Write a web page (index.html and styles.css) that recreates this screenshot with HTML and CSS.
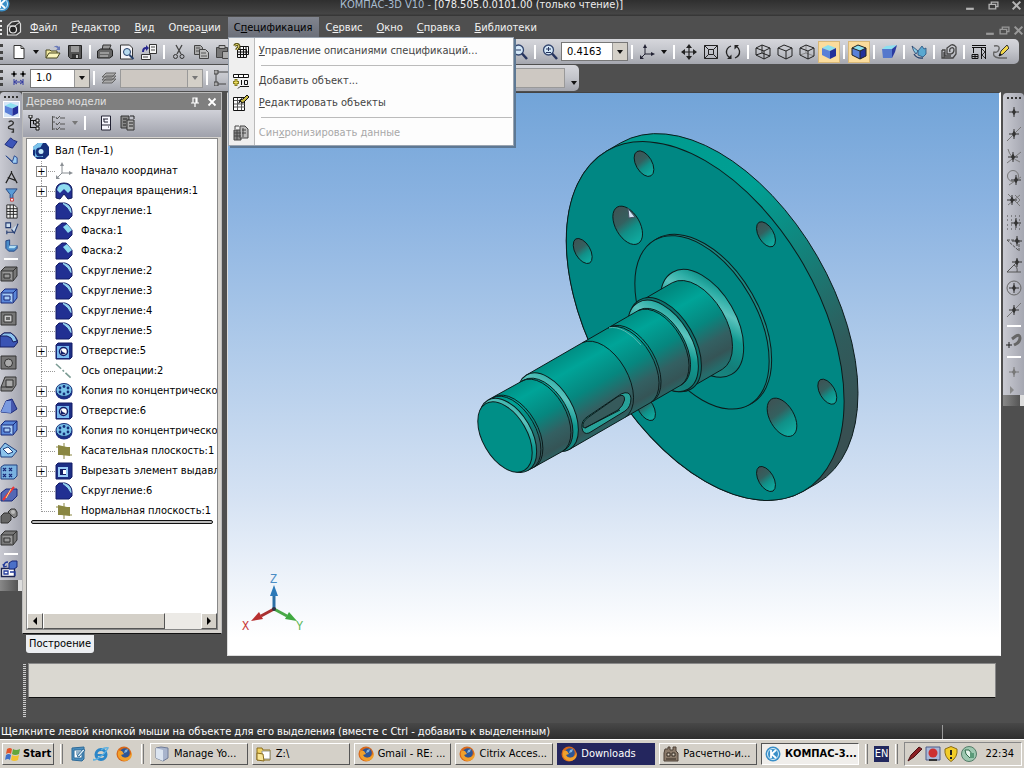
FILE: index.html
```html
<!DOCTYPE html>
<html lang="ru">
<head>
<meta charset="utf-8">
<title>КОМПАС-3D V10</title>
<link rel="stylesheet" href="styles.css">
</head>
<body>
<svg class="defs" aria-hidden="true">
  <symbol id="new" viewBox="0 0 16 16"><path d="M3 1.500h7l3 3v10H3z" fill="#fff" stroke="#333"/><path d="M10 1.500v3h3" fill="none" stroke="#333"/></symbol>
  <symbol id="open" viewBox="0 0 16 16"><path d="M1 14V6h4l1 1h6v2" fill="#f2eaa0" stroke="#4a4820"/><path d="M1 14l3-5h11l-3 5z" fill="#fbf6bd" stroke="#4a4820"/><path d="M8 4q3-4 6-1l1-1v4h-4l1.500-1.500Q10 2 8 4z" fill="#6a7ab8"/></symbol>
  <symbol id="save" viewBox="0 0 16 16"><path d="M1.500 1.500h13v13h-11l-2-2z" fill="#555" stroke="#222"/><path d="M4 2h8v6H4z" fill="#999"/><path d="M5 10h7v4H5z" fill="#333"/><path d="M9 11h2v3H9z" fill="#bbb"/></symbol>
  <symbol id="print" viewBox="0 0 16 16"><path d="M5 6l1-5h8l-2 5z" fill="#999" stroke="#333"/><path d="M.5 7l3-2h11l1 2v5l-3 2H.5z" fill="#666" stroke="#222"/><path d="M3 9h9M3 12h8" stroke="#ccc"/></symbol>
  <symbol id="preview" viewBox="0 0 16 16"><path d="M1.500 1h9l3 3v11h-12z" fill="#f4f4f8" stroke="#333"/><circle cx="8" cy="8" r="3.500" fill="#b8dcf0" stroke="#26406a"/><path d="M10.500 11l4 4" stroke="#26406a" stroke-width="2"/></symbol>
  <symbol id="manager" viewBox="0 0 16 16"><path d="M8.500.5h7v9h-7zM.5 10.500h9v5h-9z" fill="#f6f6f6" stroke="#333"/><path d="M10 3h4M10 6h4M2 13h5" stroke="#444"/><path d="M1 8q0-5 4-5V1l3 3-3 3V5q-2 0-2 3z" fill="#28288e"/></symbol>
  <symbol id="cut" viewBox="0 0 16 16"><path d="M5 1l5 9M11 1L6 10" stroke="#444" fill="none" stroke-width="1.300"/><circle cx="4.500" cy="12.500" r="2" fill="none" stroke="#333"/><circle cx="11" cy="12.500" r="2" fill="none" stroke="#333"/></symbol>
  <symbol id="copy" viewBox="0 0 16 16"><path d="M1.500 1.500h6l2 2v7h-8z" fill="#aaa" stroke="#444"/><path d="M6.500 5.500h6l3 3v6h-9z" fill="#bbb" stroke="#444"/><path d="M8 9h5M8 12h6M3 4h4M3 7h3" stroke="#555"/></symbol>
  <symbol id="paste" viewBox="0 0 16 16"><path d="M1.500 3.500h11v10h-11z" fill="#777" stroke="#444"/><path d="M4 1.500h6v3H4z" fill="#bbb" stroke="#444"/><path d="M7.500 7.500h8v7h-8z" fill="#aaa" stroke="#444"/></symbol>
  <symbol id="zoom" viewBox="0 0 16 16"><circle cx="6.500" cy="6" r="5" fill="#d4e8f8" stroke="#33466f" stroke-width="1.300"/><path d="M10 9.500l5 5.500" stroke="#26345e" stroke-width="2.500"/><path d="M4 5h5M6.500 3v4M4 8.500h5" stroke="#26345e"/></symbol>
  <symbol id="zoomout" viewBox="0 0 16 16"><circle cx="6.500" cy="6" r="5" fill="#d4e8f8" stroke="#33466f" stroke-width="1.300"/><path d="M10 9.500l5 5.500" stroke="#26345e" stroke-width="2.500"/><path d="M4 6h5" stroke="#26345e"/></symbol>
  <symbol id="axes" viewBox="0 0 16 16"><path d="M6 10V2M6 10h8M6 10l-4 4" stroke="#223" fill="none"/><path d="M6 0l2 4H4zM16 10l-4-2v4zM1 15V11l4 4z" fill="#223"/></symbol>
  <symbol id="move" viewBox="0 0 16 16"><path d="M8 2v12M2 8h12" stroke="#222" stroke-width="1.200"/><path d="M8 0l3 4H5zM8 16l3-4H5zM0 8l4-3v6zM16 8l-4-3v6z" fill="#222"/></symbol>
  <symbol id="frame" viewBox="0 0 16 16"><path d="M1.500 1.500h13v13h-13zM5.500 5.500h5v5h-5zM1.500 1.500l4 4M14.500 1.500l-4 4M1.500 14.500l4-4M14.500 14.500l-4-4" fill="none" stroke="#222"/></symbol>
  <symbol id="rotate" viewBox="0 0 16 16"><path d="M6 2Q1 4 1.500 9q.5 3 3 4.500M10 14q5-2 4.500-7-.5-3-3-4.500" fill="none" stroke="#222" stroke-width="1.300"/><path d="M2 15h4.500V10.500zM14 1H9.500v4.500z" fill="#222"/></symbol>
  <symbol id="wire" viewBox="0 0 16 16"><path d="M1 4l6-3 8 3v8l-6 3-8-4zM1 4l8 3 6-3M9 7v8M7 1v8l8 3M7 9l-6 2" fill="none" stroke="#222"/></symbol>
  <symbol id="cube" viewBox="0 0 16 16"><path d="M1 4l6-3 8 3v8l-6 3-8-4zM1 4l8 3 6-3M9 7v8" fill="none" stroke="#222"/></symbol>
  <symbol id="thin" viewBox="0 0 16 16"><path d="M7 1v8l8 3M7 9l-6 2" fill="none" stroke="#888"/><path d="M1 4l6-3 8 3v8l-6 3-8-4zM1 4l8 3 6-3M9 7v8" fill="none" stroke="#222"/></symbol>
  <symbol id="solid" viewBox="0 0 16 16"><path d="M1 4l6-3 8 3-6 3z" fill="#8ce0f0"/><path d="M1 4l8 3v8l-8-4z" fill="#5a80d8"/><path d="M9 7l6-3v8l-6 3z" fill="#24309a"/></symbol>
  <symbol id="solidedge" viewBox="0 0 16 16"><use href="#solid"/><use href="#cube"/></symbol>
  <symbol id="persp" viewBox="0 0 16 16"><path d="M1 5l4-3 11-1-5 4z" fill="#8ce0f0"/><path d="M1 5h10v9H2z" fill="#5578cc"/><path d="M11 5l5-4-2 7-3 6z" fill="#2a3aa0"/></symbol>
  <symbol id="rebuild" viewBox="0 0 16 16"><path d="M7 7l4-5 2 3 2-1v6l-3 3-5-2z" fill="#5aa8d0" stroke="#27507c" stroke-width=".8"/><path d="M1 2l6 5-2 3q-3-3-4-8z" fill="#8acbe6" stroke="#26406a" stroke-width=".8"/><path d="M3 10q3 5 9 4" fill="none" stroke="#26406a" stroke-width="1.300"/></symbol>
  <symbol id="spiral" viewBox="0 0 16 16"><path d="M1 6v8h11l3-4V3q-2-3-5-2L6 4v6h4q3-1 3-4t-3-2q-2 1-1 4M1 6h3v6h6M3 14V8" fill="none" stroke="#444" stroke-width="1.300"/></symbol>
  <symbol id="crane" viewBox="0 0 16 16"><path d="M1 1.500h14M1 3.500h14M10.500 4v11M14.500 4v11M2.500 4v5M1 10.500h6v4H1zM4 10.500v4M1 12.500h6" fill="none" stroke="#111"/><path d="M11 5l3 3-3 3 3 3" fill="none" stroke="#333"/></symbol>
  <symbol id="pencil" viewBox="0 0 16 16"><path d="M1 2q6-1 5 3T1 8q-2 5 5 6h8" fill="none" stroke="#666" stroke-width="1.400"/><path d="M6 12l2-5 6-6 2 3-6 6z" fill="#f4d84a" stroke="#333"/><path d="M6 12l1-3 2 2z" fill="#111"/></symbol>
  <symbol id="step" viewBox="0 0 16 16"><path d="M3 1v6M0 4h6M12 1v6M9 4h6" stroke="#222" stroke-width="1.200"/><circle cx="3" cy="4" r="1.500"/><circle cx="12" cy="4" r="1.500"/><path d="M3 9v6M12 9v6M4 12h8M6 10l-3 2 3 2M9 10l3 2-3 2" fill="none" stroke="#3038a0"/></symbol>
  <symbol id="layers" viewBox="0 0 16 16"><path d="M1 13l4-4h10l-4 4zM1 10l4-4h10l-4 4zM1 7l4-4h10l-4 4z" fill="#aaa" stroke="#666"/></symbol>
  <symbol id="nodes" viewBox="0 0 16 16"><path d="M4 2h10M2 4v8M4 14h8M0 0h4v4H0zM0 12h4v4H0z" fill="#aaa" stroke="#444"/></symbol>
  <symbol id="tree" viewBox="0 0 16 16"><path d="M2.500 1v12M2.500 5.500H8M2.500 12.500H8M5.500 5.500V9H8" fill="none" stroke="#111"/><path d="M1 0h3v3H1zM8 4h3v3H8zM8 8h3v3H8zM8 12h3v3H8z" fill="#eee" stroke="#111"/></symbol>
  <symbol id="checks" viewBox="0 0 16 16"><path d="M2.500 1v14M2.500 2H5M2.500 7H5M2.500 14H5M10 3h5M10 9h5M10 14h5M6 2l1 2 3-3M6 8l1 2 3-3M6 13l1 2 3-3" fill="none" stroke="#555"/></symbol>
  <symbol id="doc" viewBox="0 0 16 16"><path d="M3.500 1h9v14h-9z" fill="#f8f8ff" stroke="#223"/><path d="M3.500 10h9M5 4h5M6 4v3h4M10 12h1" stroke="#223" fill="none"/></symbol>
  <symbol id="docs" viewBox="0 0 16 16"><path d="M1 1h8v12H1z" fill="#888" stroke="#333"/><path d="M7 5h7v10H7z" fill="#aaa" stroke="#333"/><path d="M3 4h4M3 7h3M3 10h3M9 8h4M9 11h4M10 1h4v3" stroke="#222" fill="none"/></symbol>
  <symbol id="part" viewBox="0 0 18 18"><path d="M1 5l5-4h8l3 4v8l-4 4H5l-4-4z" fill="#16307a"/><path d="M1 5l5-4h5L8 6l-7 2z" fill="#7cc4ec"/><path d="M3 7h8v8H3z" fill="#6ab4e4"/><circle cx="8" cy="10" r="4.500" fill="#16307a"/><circle cx="9" cy="9.500" r="2.500" fill="#c8ecfa"/></symbol>
  <symbol id="origin" viewBox="0 0 18 18"><path d="M7 11V2M7 11h9M7 11l-5 5" stroke="#8a8f94" fill="none"/><path d="M7 0l2 4H5zM18 11l-4-2v4zM1 17v-4l4 4z" fill="#8a8f94"/></symbol>
  <symbol id="revolve" viewBox="0 0 18 18"><path d="M1 16V7q1-6 8-6t8 6v9l-4 1-4-5-4 5z" fill="#222f92" stroke="#101c5c"/><path d="M2 8q1-6 7-6t7 6l-3 3-4-4-4 4z" fill="#8fdcf0"/></symbol>
  <symbol id="fillet" viewBox="0 0 18 18"><path d="M1 4l3-3h6q7 2 7 9v4l-3 3H1z" fill="#222f92" stroke="#141d66"/><path d="M8 1.500q8 1 8 9-2-5-8-9z" fill="#9adcf2" stroke="#9adcf2"/></symbol>
  <symbol id="chamfer" viewBox="0 0 18 18"><path d="M1 6l6-5h4l6 7v5l-4 4H1z" fill="#222f92" stroke="#141d66"/><path d="M8 5l4-3 5 6-4 3z" fill="#8fdcf0"/></symbol>
  <symbol id="hole" viewBox="0 0 18 18"><path d="M1 3l2-2h14v14l-2 2H1z" fill="#1d2f86" stroke="#141d66"/><path d="M2 4h12v12H2z" fill="#7abaf0"/><circle cx="8.500" cy="9.500" r="4" fill="#fff" stroke="#141d66" stroke-width="1.500"/><path d="M6 7v5q3 1 5-1-4 0-5-4z" fill="#141d66"/></symbol>
  <symbol id="axis" viewBox="0 0 18 18"><path d="M1 2L17 17" stroke="#7c9c94" stroke-width="1.600" stroke-dasharray="7 2 2 2"/></symbol>
  <symbol id="array" viewBox="0 0 18 18"><ellipse cx="9" cy="10" rx="8.500" ry="7.500" fill="#1d2f86"/><ellipse cx="9" cy="8" rx="8" ry="6.500" fill="#79c3ea" stroke="#16307a"/><g fill="#16307a"><circle cx="5" cy="6" r="1.400"/><circle cx="9" cy="4.500" r="1.400"/><circle cx="13" cy="6" r="1.400"/><circle cx="5" cy="10" r="1.400"/><circle cx="9" cy="12" r="1.400"/><circle cx="13" cy="10" r="1.400"/></g></symbol>
  <symbol id="plane" viewBox="0 0 18 18"><path d="M3 3l9 2h3v9l-9-1H3z" fill="#8a8742"/><path d="M9 1v16M1 5h3M15 13h2" stroke="#8a8742"/></symbol>
  <symbol id="extrude" viewBox="0 0 18 18"><path d="M1 3l2-2h14v14l-2 2H1z" fill="#1d2f86" stroke="#141d66"/><path d="M3 5h10v10H3z" fill="#9acbf6"/><path d="M5 7h6v6H5z" fill="#141d66"/><path d="M8 8h3v4H8z" fill="#fff"/></symbol>
  <symbol id="curve" viewBox="0 0 16 16"><path d="M5 3q4-2 5 1 0 2-3 3t-2 3q3 1 5 1v3H8" fill="none" stroke="#333" stroke-width="1.500"/></symbol>
  <symbol id="surf" viewBox="0 0 16 16"><path d="M1 9l6-7q3 3 7 4l-5 7q-4-1-8-4z" fill="#3d55b8" stroke="#1c2c78"/></symbol>
  <symbol id="rib" viewBox="0 0 16 16"><path d="M2 3l8 8h4V5l-3-2-2 6z" fill="#9ccdf4" stroke="#26458c"/></symbol>
  <symbol id="compass" viewBox="0 0 16 16"><path d="M2 14L8 3l6 11M4 8l8 3M8 1v3" fill="none" stroke="#222" stroke-width="1.300"/></symbol>
  <symbol id="filter" viewBox="0 0 16 16"><path d="M2 2h12L9.500 8v4h-3V8z" fill="#5a9cd8" stroke="#284880"/><path d="M7 12h3v3H7z" fill="#fff" stroke="#c33"/></symbol>
  <symbol id="grid" viewBox="0 0 16 16"><path d="M3 1h8l3 3v11H3z" fill="#eee" stroke="#222"/><path d="M3 5h11M3 8h11M3 11h11M6.500 1v14M10 1v14" stroke="#222"/></symbol>
  <symbol id="measure" viewBox="0 0 16 16"><path d="M2 2h5v5H2zM3 12h8M3 10v4M8 9l3 4 4-10" fill="#cde" stroke="#223a70" stroke-width="1.200"/></symbol>
  <symbol id="elbow" viewBox="0 0 16 16"><path d="M2 3l4-1v6h8v3l-3 3H5l-3-3z" fill="#4a8cc8" stroke="#204080"/><path d="M6 8l8 0-3 3H5z" fill="#b4e0f4"/></symbol>
  <symbol id="box" viewBox="0 0 18 18"><path d="M1 6l4-4h12v9l-4 5H1z" fill="#5a86d8" stroke="#182878"/><path d="M1 6h12v10M13 6l4-4M4 9h6v4H4z" fill="#a8ccf4" stroke="#182878"/></symbol>
  <symbol id="boxg" viewBox="0 0 18 18"><path d="M1 6l4-4h12v9l-4 5H1z" fill="#777" stroke="#333"/><path d="M1 6h12v10M13 6l4-4M4 9h6v4H4z" fill="#999" stroke="#333"/></symbol>
  <symbol id="shellg" viewBox="0 0 18 18"><path d="M1 3h15v13H1z" fill="#777" stroke="#333"/><path d="M4 6h8v7H4z" fill="#ccc" stroke="#333"/><path d="M6 8h4v3H6z" fill="#666"/></symbol>
  <symbol id="round" viewBox="0 0 18 18"><path d="M0 5l4-3h7q6 4 7 9l-4 5H0z" fill="#3a54b4" stroke="#182060"/><path d="M0 5l4-3h7q5 3 6 8l-4 1q-1-5-6-6z" fill="#8cc4ee" stroke="#182060"/></symbol>
  <symbol id="holeg" viewBox="0 0 18 18"><path d="M1 3h15v13H1z" fill="#777" stroke="#333"/><circle cx="8.500" cy="10" r="4" fill="#aaa" stroke="#333"/></symbol>
  <symbol id="cutg" viewBox="0 0 18 18"><path d="M1 12l4-10h11v8l-4 6H1z" fill="#888" stroke="#333"/><path d="M6 5h7v7H6zM1 12h11" fill="#aaa" stroke="#333"/></symbol>
  <symbol id="loft" viewBox="0 0 18 18"><path d="M1 15l5-11 6-2 5 10-6 4z" fill="#4658ae" stroke="#182878"/><path d="M1 15L6 4h5v12z" fill="#7a9ae0"/></symbol>
  <symbol id="sheet" viewBox="0 0 18 18"><path d="M0 8l5-6 12 8-5 6H1z" fill="#8cc4ec" stroke="#204080"/><path d="M3 8l5-2 5 5-5 2z" fill="#fff" stroke="#204080"/></symbol>
  <symbol id="pattern" viewBox="0 0 18 18"><path d="M1 4l3-2h13v11l-3 3H1z" fill="#7ab2e0" stroke="#204080"/><path d="M3 5l3 3M6 5L3 8M9 5l3 3M12 5L9 8M3 11l3 3M6 11l-3 3M9 11l3 3M12 11l-3 3" stroke="#182878" stroke-width="1.300"/></symbol>
  <symbol id="section" viewBox="0 0 18 18"><path d="M1 8l5-4h11v7l-5 5H1z" fill="#5468b4" stroke="#182878"/><path d="M3 15L14 2" stroke="#e33" stroke-width="2"/><path d="M6 13l5-9" stroke="#f7e58a"/></symbol>
  <symbol id="bool" viewBox="0 0 18 18"><path d="M1 9l3-3h7v7l-3 3H1z" fill="#666" stroke="#333"/><path d="M8 5l3-3h4l2 3v4l-3 2z" fill="#888" stroke="#333"/><circle cx="13" cy="5" r="2" fill="#bbb"/></symbol>
  <symbol id="assoc" viewBox="0 0 18 18"><path d="M1.500 8.500h13v8h-13z" fill="#fff" stroke="#1c2450" stroke-width="1.400"/><path d="M4 11h4v3H4zM10 12h5v4M4 6q0-4 4-4M3 4l1 3 3-1" fill="none" stroke="#223a9a" stroke-width="1.300"/><path d="M9 3l3-2h5v6l-3 2H9z" fill="#4a70c8" stroke="#182878"/></symbol>
  <symbol id="spark" viewBox="0 0 16 16"><path d="M8 3v10M3 8h10" stroke="currentColor"/><path d="M8 4.500L10 8l-2 3.500L6 8z" fill="currentColor"/></symbol>
  <symbol id="s-line" viewBox="0 0 16 16"><path d="M1 15L15 1" stroke="#777"/><use href="#spark"/></symbol>
  <symbol id="s-cross" viewBox="0 0 16 16"><path d="M1 15L15 4M2 1q2 9 12 13" fill="none" stroke="#777"/><use href="#spark" x="-1" y="1"/></symbol>
  <symbol id="s-tan" viewBox="0 0 16 16"><circle cx="7" cy="6" r="5.500" fill="none" stroke="#777"/><path d="M3 15L15 7" stroke="#777"/><use href="#spark" x="2" y="2"/></symbol>
  <symbol id="s-norm" viewBox="0 0 16 16"><path d="M2 2l12 12M2 13L14 3M9 3l5 5-3 3" fill="none" stroke="#777"/><use href="#spark" x="-2"/></symbol>
  <symbol id="s-grid" viewBox="0 0 16 16"><path d="M1 2h15M1 6h15M1 11h15M1 15h15" stroke="#444" stroke-dasharray="1 3"/><use href="#spark" x="2" y="1"/></symbol>
  <symbol id="s-tri" viewBox="0 0 16 16"><path d="M1 4h12v11M1 4l11 10" fill="none" stroke="#555" stroke-dasharray="3 1"/><use href="#spark" x="3" y="-3"/></symbol>
  <symbol id="s-ang" viewBox="0 0 16 16"><path d="M15 14H1L12 3M8 7q4 2 3 7" fill="none" stroke="#555"/><use href="#spark" x="3" y="-4"/></symbol>
  <symbol id="s-cen" viewBox="0 0 16 16"><circle cx="8" cy="8" r="7" fill="none" stroke="#666"/><use href="#spark"/></symbol>
  <symbol id="magnet" viewBox="0 0 16 16"><path d="M6 6l4-3q4-2 4 2 0 4-4 6l-2 1" fill="none" stroke="#666" stroke-width="3"/><path d="M3 9v6M0 12h6" stroke="#222"/></symbol>
  <symbol id="m-desc" viewBox="0 0 16 16"><path d="M7 3.500h8.500v8H7z" fill="#fff" stroke="#111"/><path d="M4.500 6.500h9v8h-9z" fill="#eee" stroke="#111"/><path d="M5 9h10M5 11.500h9M7.500 6v8M10.500 4v10M13 4v8" stroke="#111"/><path d="M1.500 3q1-2 3-1.500t1 3L4 6v1" fill="none" stroke="#5c571a" stroke-width="3"/><path d="M1.500 3q1-2 3-1.500t1 3L4 6v1" fill="none" stroke="#e8dc7a"/></symbol>
  <symbol id="m-add" viewBox="0 0 16 16"><path d="M.5 1.500h15v3H.5zM5.500 1.500v3M10.500 1.500v3" fill="#fff" stroke="#111"/><path d="M3 6v7M0 9.500h6" stroke="#857c20" stroke-width="3"/><path d="M3 7v5M1 9.500h4" stroke="#f0e060"/><path d="M8.500 7v5M11.500 7.500h3v4h-3zM5 15.500l2-2h9" fill="none" stroke="#111"/></symbol>
  <symbol id="m-edit" viewBox="0 0 16 16"><path d="M.5 2.500h11v13H.5z" fill="#fff" stroke="#111"/><path d="M1 5.500h11M1 9h11M1 12h11M4.500 3v12M8.500 3v12" stroke="#555"/><path d="M5 9l2-5 2 2z" fill="#111"/><path d="M7 5l3-1 4-4 2 2-5 5-2 1z" fill="#c8b840" stroke="#111"/></symbol>
  <symbol id="m-sync" viewBox="0 0 16 16"><path d="M1 5h7v10H1z" fill="#888" stroke="#444"/><path d="M7 1h5l3 3v9H7z" fill="#bbb" stroke="#444"/><path d="M1 8h7M1 11h7M4 5v10M9 5h4M9 8h4M10 3v9M2 4V1h4" fill="none" stroke="#444"/></symbol>
  <symbol id="ff" viewBox="0 0 16 16"><circle cx="8" cy="8" r="7.500" fill="#d8681a"/><circle cx="9" cy="7" r="4.800" fill="#2d5696"/><path d="M1 4q2 1 5 1l2 3-3 1q2 4 7 2 4-2 3-6 2 5-1 8-5 4-10 0-4-4-1-9z" fill="#f0a02c"/><path d="M9 4l3-1-1 3-3 1z" fill="#83b4dc"/></symbol>
  <symbol id="ie" viewBox="0 0 16 16"><circle cx="8" cy="8.500" r="5" fill="none" stroke="#2b86c8" stroke-width="3"/><path d="M4 9h9" stroke="#2b86c8" stroke-width="2"/><path d="M1 13Q-1 15 4 13 12 8 15 2q-3-1-7 2" fill="none" stroke="#5eb0e0" stroke-width="1.500"/></symbol>
  <symbol id="desk" viewBox="0 0 16 16"><path d="M2 2l12-1v12l-2 2-10-1z" fill="#4d90c0" stroke="#2d6a98"/><path d="M4 4h8v8H4z" fill="#fff" stroke="#2d6a98"/><path d="M6 6h4M6 8h3" stroke="#2d6a98"/><path d="M7 10l6-7 2 1-6 7z" fill="#d7ecf8" stroke="#2d6a98"/></symbol>
  <symbol id="server" viewBox="0 0 16 16"><path d="M2 2l5-1 7 1v10l-5 3-7-3z" fill="#a8b4cc" stroke="#707c98"/><path d="M2 2l7 2v11l-7-3z" fill="#dbe4f0"/></symbol>
  <symbol id="folder" viewBox="0 0 16 16"><path d="M1 2h5l1 2h7v10H1z" fill="#f0d264" stroke="#8a6c1c"/><path d="M6 5h8v8H6z" fill="#fff" stroke="#998" /><path d="M1 7l6 1 1 7-7-1z" fill="#f8e596" stroke="#8a6c1c"/></symbol>
  <symbol id="app" viewBox="0 0 16 16"><path d="M2 3h3V1h2v3h3V1h3v4l2 2v8H1V7z" fill="#8a7a6a" stroke="#4c4036"/><path d="M4 7h3v3H4zM9 7h3v3H9zM3 13h10" fill="#ddd3c4" stroke="#332a22"/></symbol>
  <symbol id="kompas" viewBox="0 0 16 16"><circle cx="8" cy="8" r="7.500" fill="#3a8fc8"/><circle cx="8" cy="8" r="5.500" fill="none" stroke="#d7eefa"/><path d="M6 4v8M11 4L6.500 8l4.500 4" fill="none" stroke="#fff" stroke-width="1.800"/></symbol>
  <symbol id="win" viewBox="0 0 16 16"><path d="M2 3q3-2 5 0L6 8Q4 6 1 8z" fill="#e2552a"/><path d="M8 3q3 2 7 0l-1 5q-4 2-7 0z" fill="#62a63c"/><path d="M1 9q3-2 5 0l-1 5q-2-2-5 0z" fill="#3e70c8"/><path d="M7 9q3 2 7 0l-1 5q-4 2-7 0z" fill="#f2c230"/></symbol>
  <symbol id="pen" viewBox="0 0 16 16"><path d="M1 15l3-6 8-8 3 2-8 8z" fill="#8c2024" stroke="#4a1012"/></symbol>
  <symbol id="net" viewBox="0 0 16 16"><path d="M1 1h14v13H1z" fill="#a9b8d8" stroke="#4c5c88"/><circle cx="8" cy="7" r="4.500" fill="#cc3030"/><path d="M4 14h8" stroke="#333" stroke-width="2"/></symbol>
  <symbol id="shield" viewBox="0 0 16 16"><path d="M8 .5l6 2.500q1 8-6 12.500Q1 11 2 3z" fill="#f2cc28" stroke="#8a6c14"/><path d="M8 4v5M8 11v2" stroke="#222" stroke-width="2"/></symbol>
  <symbol id="safe" viewBox="0 0 16 16"><circle cx="8" cy="8" r="7.500" fill="#9dc8b0" stroke="#547c68"/><path d="M4 4h4l3 4-2 4-4-4z" fill="#e4f4ea" stroke="#2f6848"/><path d="M9 7h4v5H9z" fill="#5a9a78"/></symbol>
  <symbol id="mdoc" viewBox="0 0 16 16"><path d="M1.500 6l4-4 7-1 2 3v8l-4 3h-9z" fill="#333" stroke="#ddd" stroke-width="1.200"/><circle cx="7" cy="9.500" r="3.500" fill="#222" stroke="#eee" stroke-width="1.200"/><path d="M2 6h7l5-4" fill="none" stroke="#ddd"/></symbol>
  <symbol id="min" viewBox="0 0 10 10"><path d="M1 8h7" stroke="currentColor" stroke-width="2"/></symbol>
  <symbol id="rest" viewBox="0 0 10 10"><path d="M1 4h6v4H1zM3 4V2h6v4H7" fill="none" stroke="currentColor" stroke-width="1.200"/></symbol>
  <symbol id="close" viewBox="0 0 10 10"><path d="M1.500 1.500l7 7M8.500 1.500l-7 7" stroke="currentColor" stroke-width="1.800"/></symbol>
  <symbol id="pin" viewBox="0 0 10 10"><path d="M3 1h4v5H3zM1 6h8M5 6v4M6 1v5" fill="none" stroke="currentColor" stroke-width="1.200"/></symbol>
</svg>

<div class="app">
  <header class="title">
    <svg class="logo"><use href="#kompas"/></svg>
    <h1><span>КОМПАС-3D V10 -</span> [078.505.0.0101.00 (только чтение)]</h1>
    <div class="winbtns">
      <button aria-label="Свернуть"><svg><use href="#min"/></svg></button><button aria-label="Восстановить"><svg><use href="#rest"/></svg></button><button aria-label="Закрыть"><svg><use href="#close"/></svg></button>
    </div>
  </header>

  <nav class="menubar">
    <i class="grip"></i>
    <button class="docicon" aria-label="Документ"><svg><use href="#mdoc"/></svg></button>
    <button class="menu"><u>Ф</u>айл</button>
    <button class="menu"><u>Р</u>едактор</button>
    <button class="menu"><u>В</u>ид</button>
    <button class="menu">Опера<u>ц</u>ии</button>
    <div class="menuwrap">
      <button class="menu open">С<u>п</u>ецификация</button>
      <div class="dropdown">
        <button><svg><use href="#m-desc"/></svg><span><u>У</u>правление описаниями спецификаций...</span></button>
        <hr>
        <button><svg><use href="#m-add"/></svg><span><u>Д</u>обавить объект...</span></button>
        <button><svg><use href="#m-edit"/></svg><span><u>Р</u>едактировать объекты</span></button>
        <hr>
        <button disabled><svg><use href="#m-sync"/></svg><span>Син<u>х</u>ронизировать данные</span></button>
      </div>
    </div>
    <button class="menu">С<u>е</u>рвис</button>
    <button class="menu"><u>О</u>кно</button>
    <button class="menu"><u>С</u>правка</button>
    <button class="menu"><u>Б</u>иблиотеки</button>
    <div class="winbtns doc">
      <button aria-label="Свернуть документ"><svg><use href="#min"/></svg></button><button aria-label="Восстановить документ"><svg><use href="#rest"/></svg></button><button aria-label="Закрыть документ"><svg><use href="#close"/></svg></button>
    </div>
  </nav>

  <div class="toolbar main">
    <i class="grip"></i>
    <button aria-label="Создать"><svg><use href="#new"/></svg></button><button class="drop" aria-label="Виды документов"></button>
    <button aria-label="Открыть"><svg><use href="#open"/></svg></button><button aria-label="Сохранить"><svg><use href="#save"/></svg></button><i class="sep"></i>
    <button aria-label="Печать"><svg><use href="#print"/></svg></button><button aria-label="Просмотр"><svg><use href="#preview"/></svg></button><button aria-label="Менеджер"><svg><use href="#manager"/></svg></button><i class="sep"></i>
    <button aria-label="Вырезать"><svg><use href="#cut"/></svg></button><button aria-label="Копировать"><svg><use href="#copy"/></svg></button><button aria-label="Вставить"><svg><use href="#paste"/></svg></button>
    <div class="covered"></div>
    <button aria-label="Уменьшить"><svg><use href="#zoomout"/></svg></button><i class="sep"></i>
    <button aria-label="Масштаб"><svg><use href="#zoom"/></svg></button>
    <div class="combo"><input aria-label="Текущий масштаб" value="0.4163"><button class="drop" aria-label="Список масштабов"></button></div><i class="sep"></i>
    <button aria-label="Ориентация"><svg><use href="#axes"/></svg></button><button class="drop" aria-label="Список ориентаций"></button><i class="sep"></i>
    <button aria-label="Сдвинуть"><svg><use href="#move"/></svg></button><button aria-label="Рамка"><svg><use href="#frame"/></svg></button><button aria-label="Повернуть"><svg><use href="#rotate"/></svg></button><i class="sep"></i>
    <button aria-label="Каркас"><svg><use href="#wire"/></svg></button><button aria-label="Без невидимых линий"><svg><use href="#cube"/></svg></button><button aria-label="Невидимые тонкие"><svg><use href="#thin"/></svg></button><button class="on" aria-label="Полутоновое"><svg><use href="#solid"/></svg></button><i class="sep"></i>
    <button class="on" aria-label="С каркасом"><svg><use href="#solidedge"/></svg></button><i class="sep"></i>
    <button aria-label="Перспектива"><svg><use href="#persp"/></svg></button><i class="sep"></i>
    <button aria-label="Перестроить"><svg><use href="#rebuild"/></svg></button><i class="sep"></i>
    <button aria-label="Упрощения"><svg><use href="#spiral"/></svg></button><i class="sep"></i>
    <button aria-label="Библиотеки"><svg><use href="#crane"/></svg></button><button aria-label="Эскиз"><svg><use href="#pencil"/></svg></button>
  </div>

  <div class="toolbar second">
    <i class="grip"></i>
    <button aria-label="Шаг курсора"><svg><use href="#step"/></svg></button>
    <div class="combo step"><input aria-label="Шаг" value="1.0"><button class="drop" aria-label="Список шагов"></button></div><i class="sep"></i>
    <button aria-label="Слои"><svg><use href="#layers"/></svg></button>
    <div class="combo off"><input aria-label="Слой" disabled><button class="drop" aria-label="Список слоёв" disabled></button></div><i class="sep"></i>
    <button aria-label="Узлы"><svg><use href="#nodes"/></svg></button>
    <div class="covered"></div>
    <input class="blank" aria-label="Координата" disabled>
    <button class="more" aria-label="Ещё"></button>
  </div>

  <main class="work">
    <aside class="side left">
      <i class="hgrip"></i>
      <button class="on" aria-label="Деталь"><svg><use href="#solid"/></svg></button><button aria-label="Кривые"><svg><use href="#curve"/></svg></button><button aria-label="Поверхности"><svg><use href="#surf"/></svg></button><button aria-label="Геометрия"><svg><use href="#rib"/></svg></button><button aria-label="Измерения"><svg><use href="#compass"/></svg></button><button aria-label="Фильтры"><svg><use href="#filter"/></svg></button><button aria-label="Спецификация"><svg><use href="#grid"/></svg></button><button aria-label="Отчёты"><svg><use href="#measure"/></svg></button><button aria-label="Листовое тело"><svg><use href="#elbow"/></svg></button>
      <i class="hsep"></i>
      <div class="big">
        <button aria-label="Выдавливание"><svg><use href="#boxg"/></svg></button><button aria-label="Вырезать"><svg><use href="#box"/></svg></button><button aria-label="Оболочка"><svg><use href="#shellg"/></svg></button><button aria-label="Скругление"><svg><use href="#round"/></svg></button><button aria-label="Отверстие"><svg><use href="#holeg"/></svg></button><button aria-label="Ребро"><svg><use href="#cutg"/></svg></button><button aria-label="Уклон"><svg><use href="#loft"/></svg></button><button aria-label="Тонкая стенка"><svg><use href="#box"/></svg></button><button aria-label="Сечение поверхностью"><svg><use href="#sheet"/></svg></button><button aria-label="Массив"><svg><use href="#pattern"/></svg></button><button aria-label="Сечение"><svg><use href="#section"/></svg></button><button aria-label="Булева операция"><svg><use href="#bool"/></svg></button><button aria-label="Деталь-заготовка"><svg><use href="#boxg"/></svg></button>
      </div>
      <i class="hsep"></i>
      <div class="big"><button aria-label="Новый чертёж"><svg><use href="#assoc"/></svg></button></div>
      <i class="cap"></i>
    </aside>

    <section class="treecol">
      <div class="panel">
        <header><h2>Дерево модели</h2><button aria-label="Закрепить"><svg><use href="#pin"/></svg></button><button aria-label="Закрыть дерево"><svg><use href="#close"/></svg></button></header>
        <div class="ptools">
          <button aria-label="Структура"><svg><use href="#tree"/></svg></button><button aria-label="Состав"><svg><use href="#checks"/></svg></button><button class="drop dim" aria-label="Список состава"></button><i class="sep"></i><button aria-label="Отношения"><svg><use href="#doc"/></svg></button><button aria-label="Дополнительное окно"><svg><use href="#docs"/></svg></button>
        </div>
        <div class="list">
          <ul>
            <li class="root"><svg><use href="#part"/></svg>Вал (Тел-1)</li>
            <li><button>+</button><svg><use href="#origin"/></svg>Начало координат</li>
            <li><button>+</button><svg><use href="#revolve"/></svg>Операция вращения:1</li>
            <li><svg><use href="#fillet"/></svg>Скругление:1</li>
            <li><svg><use href="#chamfer"/></svg>Фаска:1</li>
            <li><svg><use href="#chamfer"/></svg>Фаска:2</li>
            <li><svg><use href="#fillet"/></svg>Скругление:2</li>
            <li><svg><use href="#fillet"/></svg>Скругление:3</li>
            <li><svg><use href="#fillet"/></svg>Скругление:4</li>
            <li><svg><use href="#fillet"/></svg>Скругление:5</li>
            <li><button>+</button><svg><use href="#hole"/></svg>Отверстие:5</li>
            <li><svg><use href="#axis"/></svg>Ось операции:2</li>
            <li><button>+</button><svg><use href="#array"/></svg>Копия по концентрической</li>
            <li><button>+</button><svg><use href="#hole"/></svg>Отверстие:6</li>
            <li><button>+</button><svg><use href="#array"/></svg>Копия по концентрической</li>
            <li><svg><use href="#plane"/></svg>Касательная плоскость:1</li>
            <li><button>+</button><svg><use href="#extrude"/></svg>Вырезать элемент выдавл</li>
            <li><svg><use href="#fillet"/></svg>Скругление:6</li>
            <li class="last"><svg><use href="#plane"/></svg>Нормальная плоскость:1</li>
          </ul>
          <div class="endbar"></div>
          <div class="scroll"><button class="lt" aria-label="Влево"></button><div class="thumb"></div><button class="rt" aria-label="Вправо"></button></div>
        </div>
      </div>
      <button class="tab">Построение</button>
    </section>

    <section class="view">
      <svg viewBox="227 93 771 562" role="img" aria-label="Модель вала">
        <defs>
          <linearGradient id="cyl" gradientUnits="userSpaceOnUse" x1="580" y1="340" x2="626" y2="420"><stop offset="0" stop-color="#008a80"/><stop offset=".22" stop-color="#00a498"/><stop offset=".5" stop-color="#06877f"/><stop offset=".72" stop-color="#336062"/><stop offset=".88" stop-color="#355456"/><stop offset="1" stop-color="#256c6b"/></linearGradient>
          <linearGradient id="lip" gradientUnits="userSpaceOnUse" x1="580" y1="340" x2="626" y2="420"><stop offset="0" stop-color="#06877f"/><stop offset=".14" stop-color="#2cada5"/><stop offset=".28" stop-color="#5cc4be"/><stop offset=".48" stop-color="#109890"/><stop offset=".75" stop-color="#147e79"/><stop offset="1" stop-color="#1c8a84"/></linearGradient>
          <linearGradient id="rim" gradientUnits="userSpaceOnUse" x1="640" y1="135" x2="850" y2="420"><stop offset="0" stop-color="#009a8e"/><stop offset=".3" stop-color="#00a094"/><stop offset=".55" stop-color="#148079"/><stop offset=".8" stop-color="#2f5c5c"/><stop offset="1" stop-color="#385052"/></linearGradient>
          <linearGradient id="bore" x1=".2" y1=".1" x2=".7" y2=".95"><stop offset="0" stop-color="#3c5556"/><stop offset=".35" stop-color="#34605f"/><stop offset=".65" stop-color="#109088"/><stop offset="1" stop-color="#10a79d"/></linearGradient>
        </defs>
        <g stroke="#0c1c1c" stroke-width="1">
          <path d="M619.800 142.800A196.500 113.400 60 0 1 816.300 483.200L802.500 491.200A196.500 113.400 60 0 1 606 150.800Z" fill="url(#rim)"/>
          <ellipse cx="704.200" cy="321" rx="196.500" ry="113.400" transform="rotate(60 704.200 321)" fill="#008783"/>
          <g fill="url(#bore)">
            <path d="M636 151.500A14 8 60 0 1 650 175.800A14 8 60 0 1 636 151.500Z"/>
            <path d="M758 222.200A14 8 60 0 1 772 246.400A14 8 60 0 1 758 222.200Z"/>
            <path d="M574.700 238.900A14 8 60 0 1 588.700 263.100A14 8 60 0 1 574.700 238.900Z"/>
            <path d="M819.300 379.600A14 8 60 0 1 833.300 403.800A14 8 60 0 1 819.300 379.600Z"/>
            <path d="M758 466.900A14 8 60 0 1 772 491.100A14 8 60 0 1 758 466.900Z"/>
            <path d="M638 395.900A14 8 60 0 1 652 420.100A14 8 60 0 1 638 395.900Z"/>
            <path d="M616.200 207.100A21 12.100 60 0 1 637.200 243.500A21 12.100 60 0 1 616.200 207.100Z"/>
            <path d="M770.500 399.100A21 12.100 60 0 1 791.500 435.500A21 12.100 60 0 1 770.500 399.100Z"/>
          </g>
          <path d="M627 208.500l7 8.500-6 1z" fill="#d5e4f4" stroke="#456"/>
          <ellipse cx="703.500" cy="321" rx="95" ry="54.800" transform="rotate(60 703.500 321)" fill="#1a8a84"/>
          <ellipse cx="701" cy="322.400" rx="95" ry="54.800" transform="rotate(60 701 322.400)" fill="#008783"/>
          <ellipse cx="701" cy="323.300" rx="59" ry="34" transform="rotate(60 701 323.300)" fill="url(#lip)"/>
          <path d="M671.300 282.700A50 28.900 60 0 1 721.300 369.300L688 388.600A50 28.900 60 0 1 638 302Z" fill="url(#cyl)"/>
          <ellipse cx="664" cy="344.700" rx="51.500" ry="29.700" transform="rotate(60 664 344.700)" fill="#0d716d"/>
          <ellipse cx="662" cy="345.900" rx="50" ry="28.900" transform="rotate(60 662 345.900)" fill="url(#lip)"/>
          <path d="M638.500 309.800A43 24.800 60 0 1 681.500 384.200L568.500 449.400A43 24.800 60 0 1 525.500 375Z" fill="url(#cyl)"/>
          <g fill="none">
            <path d="M637 310.700A43 24.800 60 0 1 680 385.100"/>
            <path d="M609 326.800A43 24.800 60 0 1 652 401.200M607 328A43 24.800 60 0 1 650 402.400M581.500 342.700A43 24.800 60 0 1 624.500 417.100"/>
            <path d="M608 327.800A43 24.800 60 0 1 640 345" stroke="#57b5af"/>
          </g>
          <ellipse cx="547" cy="412.200" rx="43" ry="24.800" transform="rotate(60 547 412.200)" fill="url(#lip)"/>
          <path d="M523 380A40.500 23.400 60 0 1 563.500 450.200L529.300 469.200A40.500 23.400 60 0 1 488.700 399Z" fill="url(#cyl)"/>
          <path d="M521 381A40.500 23.400 60 0 1 561.500 451.200M493 397A40.500 23.400 60 0 1 533.500 467.200M491 398A40.500 23.400 60 0 1 531.500 468.200" fill="none"/>
          <ellipse cx="507" cy="435.300" rx="40.500" ry="23.400" transform="rotate(60 507 435.300)" fill="url(#lip)"/>
          <ellipse cx="504" cy="437" rx="38.500" ry="22.200" transform="rotate(60 504 437)" fill="#008f87"/>
          <path d="M581 428Q580 421 586 417L620 394Q629 390 630 398Q630 407 624 411L588 433Q582 435 581 428Z" fill="#27a198"/>
          <path d="M582 427Q581 422 587 417.500L617 396.500Q624 393 623.500 400Q622 406 617 410L584 428Z" fill="#365a5b"/>
          <path d="M584 428L619 410" fill="none"/>
        </g>
        <g stroke-width="3">
          <path d="M273 609V594" stroke="#2c6ea4"/><path d="M273 585l4 11h-8z" fill="#2c79b8"/>
          <path d="M273 609l-13 7" stroke="#a83030"/><path d="M250 621l8-9 4 7z" fill="#b83030"/>
          <path d="M273 609l13 7" stroke="#4aa848"/><path d="M296 621l-8-9-4 7z" fill="#3fa840"/>
          <circle cx="273" cy="609" r="2" fill="#334"/>
        </g>
        <g class="axis"><text x="269" y="583" fill="#4a8cc4">Z</text><text x="241" y="630" fill="#c83838">X</text><text x="295" y="630" fill="#5cb858">Y</text></g>
      </svg>
    </section>

    <aside class="side right">
      <i class="hgrip"></i>
      <button aria-label="Ближайшая точка"><svg><use href="#spark"/></svg></button><button aria-label="Середина"><svg><use href="#s-line"/></svg></button><button aria-label="Пересечение"><svg><use href="#s-cross"/></svg></button><button aria-label="Касание"><svg><use href="#s-tan"/></svg></button><button aria-label="Нормаль"><svg><use href="#s-norm"/></svg></button><button aria-label="По сетке"><svg><use href="#s-grid"/></svg></button><button aria-label="Выравнивание"><svg><use href="#s-tri"/></svg></button><button aria-label="Угловая привязка"><svg><use href="#s-ang"/></svg></button><button aria-label="Центр"><svg><use href="#s-cen"/></svg></button><button aria-label="Точка на кривой"><svg><use href="#s-line"/></svg></button>
      <i class="hsep"></i>
      <button aria-label="Привязки"><svg><use href="#magnet"/></svg></button>
      <i class="hsep"></i>
      <button class="faint" aria-label="Точка"><svg><use href="#spark"/></svg></button><i class="tri"></i>
      <i class="cap"></i>
    </aside>
  </main>

  <section class="props"><i></i><div></div></section>
  <footer class="status"><p>Щелкните левой кнопкой мыши на объекте для его выделения (вместе с Ctrl - добавить к выделенным)</p><i></i></footer>

  <nav class="taskbar">
    <button class="start"><svg><use href="#win"/></svg>Start</button>
    <i class="tsep"></i>
    <div class="quick"><button aria-label="Рабочий стол"><svg><use href="#desk"/></svg></button><button aria-label="Internet Explorer"><svg><use href="#ie"/></svg></button><button aria-label="Firefox"><svg><use href="#ff"/></svg></button></div>
    <i class="tsep"></i>
    <div class="tasks">
      <button><svg><use href="#server"/></svg>Manage Yo...</button>
      <button><svg><use href="#folder"/></svg>Z:\</button>
      <button><svg><use href="#ff"/></svg>Gmail - RE: ...</button>
      <button><svg><use href="#ff"/></svg>Citrix Acces...</button>
      <button class="alert"><svg><use href="#ff"/></svg>Downloads</button>
      <button><svg><use href="#app"/></svg>Расчетно-и...</button>
      <button class="cur"><svg><use href="#kompas"/></svg>КОМПАС-3...</button>
    </div>
    <i class="tsep"></i>
    <button class="lang">EN</button>
    <i class="tsep"></i>
    <div class="tray"><svg><use href="#pen"/></svg><svg><use href="#net"/></svg><svg><use href="#shield"/></svg><svg><use href="#safe"/></svg><time>22:34</time></div>
  </nav>
</div>
</body>
</html>
```
FILE: styles.css
```css
* { box-sizing: border-box; }
body { margin: 0; background: #4f4f4f; color: #000; font: 11px/14px "DejaVu Sans Condensed", "DejaVu Sans", sans-serif; }
button, input { font: inherit; color: inherit; margin: 0; padding: 0; border: 0; background: none; border-radius: 0; }
h1, h2, p, ul { margin: 0; padding: 0; font: inherit; list-style: none; }
i { display: block; }
svg { display: block; flex: none; width: 16px; height: 16px; }
.defs { position: absolute; width: 0; height: 0; }
.app { display: flex; flex-direction: column; height: 100vh; overflow: hidden; }

.title { flex: none; display: flex; align-items: flex-start; height: 16px; background: linear-gradient(#2f2f2f, #454545 85%, #333); color: #eee; }
.title h1 { flex: 1; padding-right: 12px; text-align: center; white-space: nowrap; line-height: 10px; }
.title h1 span { color: #a9bdd0; }
.logo { margin: -4px 0 0 -6px; }
.winbtns { display: flex; gap: 12px; color: #b4b4b4; }
.winbtns svg { width: 11px; height: 11px; }
.title .winbtns { padding-right: 2px; }
.winbtns.doc { gap: 3px; margin-left: auto; align-self: center; padding-top: 6px; color: #999; }

.menubar { flex: none; display: flex; height: 23px; background: #4f4f4f; color: #f2f2f2; }
.grip { width: 3px; margin: 4px 3px 4px 0; border-left: 2px dotted #e8e8e8; }
.docicon { margin-right: 1px; }
.menu { height: 21px; padding: 0 7px; margin-top: 1px; white-space: nowrap; }
.menuwrap { position: relative; }
.menu.open { padding: 0 6px; background: linear-gradient(#81858f, #6a6e78); color: #000; }
.dropdown { position: absolute; z-index: 5; left: 0; top: 21px; width: 286px; padding: 2px 1px 1px 26px; background: linear-gradient(90deg, #efefef 25px, #bbb 25px, #bbb 26px, #fdfdfd 26px); border: 1px solid #9aa4b0; box-shadow: 2px 2px 0 #5d7894; color: #444; }
.dropdown button { display: flex; width: 100%; height: 22px; align-items: center; text-align: left; margin-left: -22px; white-space: nowrap; }
.dropdown span { padding-left: 10px; }
.dropdown button:disabled { color: #a8a8a8; }
.dropdown hr { border: 0; border-top: 1px solid #bbb; margin: 3px 0 4px 6px; }

.toolbar { flex: none; display: flex; align-items: center; height: 25px; margin-right: 5px; margin-bottom: 1px; background: linear-gradient(#d6d7dc, #c2c4ca 50%, #a4a6ae); border-radius: 0 5px 5px 0; }
.toolbar .grip { width: 4px; height: 16px; margin: 0 4px 0 0; border-left: 3px dotted #444; }
.toolbar button { flex: none; display: flex; justify-content: center; align-items: center; width: 22px; height: 22px; }
.toolbar .on { background: #fbdc9c; border: 1px solid #d8b878; }
.sep { flex: none; width: 8px; height: 14px; background: linear-gradient(90deg, transparent 3px, #fff 3px, #fff 5px, transparent 5px); }
.toolbar .drop { width: 12px; }
.drop::after { content: ""; border: 3px solid transparent; border-top: 4px solid #111; border-bottom: 0; }
.toolbar.main .covered { width: 275px; flex: none; }
.combo { flex: none; display: flex; height: 19px; width: 67px; background: #fff; border: 1px solid #777; }
.combo input { flex: 1; min-width: 0; padding-left: 5px; }
.toolbar .combo .drop { width: 15px; height: 17px; background: #d4d0c8; border-left: 1px solid #999; }
.toolbar .more { width: 10px; margin-left: 4px; }
.more::after { content: ""; border: 3px solid transparent; border-top: 4px solid #111; margin-top: 12px; }
.toolbar.second { height: 26px; width: 579px; }
.combo.step { width: 60px; }
.combo.off { width: 83px; background: #cdc8c2; border-color: #999; }
.combo.off .drop::after, .drop.dim::after { border-top-color: #777; }
.toolbar.second .covered { flex: 1; }
.blank { flex: none; width: 50px; height: 20px; background: #cdc8c2; border: 1px solid #999; }

.work { flex: 1; min-height: 0; display: flex; align-items: flex-start; }
.side { flex: none; width: 22px; display: flex; flex-direction: column; align-items: center; background: linear-gradient(90deg, #c9cad2, #a5a7b1); border-radius: 4px 4px 0 0; }
.side button { display: flex; align-items: center; justify-content: center; }
.side.left button { height: 17px; }
.side.left .on { background: #d6e6f8; border: 1px solid #fff; }
.side.left svg { width: 15px; height: 15px; }
.big { align-self: flex-start; }
.side.left .big button { height: 22px; width: 20px; margin-left: -1px; }
.side.left .big svg { width: 18px; height: 18px; }
.hgrip { width: 14px; height: 8px; border-top: 2px dotted #333; margin-top: 4px; flex: none; }
.side.left .hgrip { height: 5px; }
.hsep { width: 14px; height: 2px; background: #fff; margin: 4px 0 3px; flex: none; }
.cap { align-self: stretch; height: 11px; background: linear-gradient(90deg, #888, #555); border-right: 4px solid #ddd; }
.side.right { width: 21px; color: #333; margin-top: 1px; }
.side.right button { height: 22px; }
.side.right .faint { color: #777; }
.tri { border: 4px solid transparent; border-left-color: #888; margin: 3px 0 1px; }
.side.right .hgrip { height: 4px; }

.treecol { flex: none; width: 200px; align-self: stretch; display: flex; flex-direction: column; padding-bottom: 3px; }
.panel { flex: 1; min-height: 0; display: flex; flex-direction: column; background: #d6d3ce; border: 1px solid #bbb; border-bottom-color: #111; }
.panel header { display: flex; gap: 7px; height: 17px; align-items: center; padding: 0 4px 0 3px; background: #7f7f7f; color: #e0e0e0; }
.panel h2 { flex: 1; }
.panel header svg { width: 10px; height: 10px; color: #fff; }
.ptools { display: flex; align-items: center; height: 27px; padding: 0 0 2px 2px; background: linear-gradient(#d0d1d8, #9fa1ab); }
.ptools button { width: 22px; height: 22px; display: flex; align-items: center; justify-content: center; }
.ptools .drop { width: 12px; }
.ptools .sep { width: 14px; }
.list { flex: 1; min-height: 0; margin: 1px 3px 3px; border: 1px solid #888; background: #fff; display: flex; flex-direction: column; overflow: hidden; }
.list ul { padding-top: 2px; }
.list li { position: relative; display: flex; align-items: center; height: 20px; padding-left: 28px; gap: 8px; white-space: nowrap; }
.list li.root { padding-left: 5px; gap: 5px; }
.list li svg { width: 18px; height: 18px; }
.list li:not(.root)::before { content: ""; position: absolute; left: 14px; top: 0; width: 13px; height: 10px; border: dotted #999; border-width: 0 0 1px 1px; }
.list li:not(.root):not(.last)::after { content: ""; position: absolute; left: 14px; top: 10px; height: 10px; border-left: 1px dotted #999; }
.list li button { position: absolute; z-index: 1; left: 9px; top: 5px; width: 11px; height: 11px; border: 1px solid #888; background: #fff; line-height: 9px; }
.endbar { height: 4px; margin: -1px 4px 0; border: 1px solid #111; background: #bbb; border-radius: 2px; position: relative; }
.scroll { display: flex; height: 16px; margin-top: auto; background: #eceae6; }
.scroll button { width: 16px; display: flex; justify-content: center; align-items: center; }
.scroll button, .thumb, .start, .tasks button { background: #d4d0c8; border: 1px solid; border-color: #fff #555 #555 #fff; }
.thumb { width: 122px; margin-right: auto; }
.lt::after, .rt::after { content: ""; border: 4px solid transparent; border-right-color: #000; margin-right: 4px; }
.rt::after { border-color: transparent transparent transparent #000; margin: 0 0 0 4px; }
.tab { align-self: flex-start; height: 18px; margin: 1px 0 0 4px; padding: 0 3px; background: #eceef1; border-radius: 0 0 3px 3px; }

.view { flex: 1; min-width: 0; align-self: stretch; margin: 0 2px 0 5px; border: 1px solid #ddd; border-top-color: #444; border-right: 2px solid #fff; background: linear-gradient(#72a4d8, #8bb3e1 20%, #b0cbea 46%, #d5e2f3 72%, #fff 97%); }
.view svg { width: 100%; height: 100%; }
.axis { font: 12px "Liberation Mono", monospace; }

.props { flex: none; display: flex; align-items: flex-start; gap: 2px; height: 67px; padding: 7px 28px 0 23px; }
.props i { width: 3px; height: 54px; margin-top: 1px; background: repeating-linear-gradient(#ccc 0 1px, #555 1px 2px); }
.props div { flex: 1; height: 35px; background: #dad8d1; border: 1px solid #888; border-bottom-color: #111; }
.status { flex: none; display: flex; justify-content: space-between; height: 16px; padding: 2px 81px 0 1px; overflow: hidden; background: linear-gradient(#484848, #2e2e2e); color: #fff; white-space: nowrap; }
.status i { border-left: 1px solid #999; }

.taskbar { flex: none; display: flex; align-items: center; height: 29px; padding: 2px 2px 3px; background: #d4d0c8; border-top: 1px solid #fff; }
.taskbar button { display: flex; align-items: center; white-space: nowrap; overflow: hidden; }
.start { height: 22px; width: 52px; gap: 2px; padding: 0 2px; font-weight: bold; }
.tsep { flex: none; width: 3px; height: 20px; margin: 0 6px; border-left: 1px solid #fff; border-right: 1px solid #777; }
.quick { display: flex; gap: 7px; margin: 0 3px 0 1px; }
.tasks { flex: 1; min-width: 0; display: flex; gap: 4px; }
.tasks button { flex: 1 1 0; min-width: 0; height: 22px; gap: 4px; padding: 0 3px; }
.tasks .alert { background: #24265e; border-color: #24265e; color: #fff; }
.tasks .cur { background: #f0eeeb; border-color: #555 #fff #fff #555; font-weight: bold; }
.lang { flex: none; height: 16px; padding: 0 1px; background: #22285e; color: #fff; }
.tray { flex: none; display: flex; align-items: center; gap: 2px; height: 24px; padding: 0 7px 0 2px; border: 1px solid; border-color: #888 #fff #fff #888; }
.tray time { padding-left: 6px; }
```
